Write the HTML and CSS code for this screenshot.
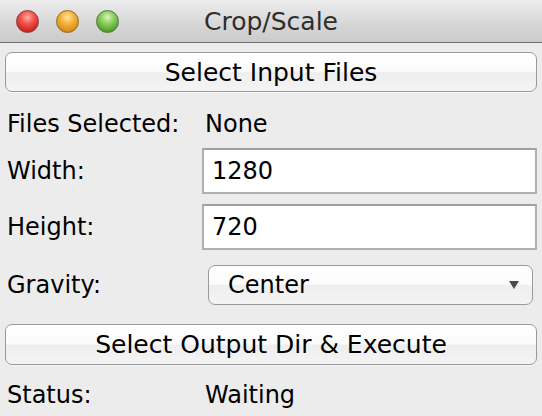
FILE: index.html
```html
<!DOCTYPE html>
<html>
<head>
<meta charset="utf-8">
<link rel="stylesheet" href="styles.css">
</head>
<body>
<div class="window">
  <div class="titlebar">
    <div class="lights">
      <span class="light red"></span>
      <span class="light yellow"></span>
      <span class="light green"></span>
    </div>
    <div class="title">Crop/Scale</div>
  </div>
  <div class="content">
    <div class="btn">Select Input Files</div>
    <div class="row files">
      <div class="label">Files Selected:</div>
      <div class="value">None</div>
    </div>
    <div class="row field first">
      <div class="label">Width:</div>
      <div class="input">1280</div>
    </div>
    <div class="row field second">
      <div class="label">Height:</div>
      <div class="input">720</div>
    </div>
    <div class="row gravity">
      <div class="label">Gravity:</div>
      <div class="select"><span>Center</span><span class="arrow"></span></div>
    </div>
    <div class="btn btn2">Select Output Dir &amp; Execute</div>
    <div class="row status">
      <div class="label">Status:</div>
      <div class="value">Waiting</div>
    </div>
  </div>
</div>
</body>
</html>
```
FILE: styles.css
```css
html, body {
  margin: 0;
  padding: 0;
  background: #ececec;
}
body {
  width: 542px;
  height: 416px;
  overflow: hidden;
  font-family: "DejaVu Sans", "Liberation Sans", sans-serif;
  font-size: 24px;
  color: #000;
}
.titlebar {
  position: relative;
  height: 42px;
  border-bottom: 1px solid #707070;
  background: linear-gradient(#ececec, #d6d6d6 60%, #cbcbcb);
  display: flex;
  align-items: center;
  justify-content: center;
}
.lights {
  position: absolute;
  left: 16px;
  top: 10px;
  display: flex;
  gap: 17px;
}
.light {
  width: 23px;
  height: 23px;
  border-radius: 50%;
  box-sizing: border-box;
}
.red {
  background: radial-gradient(circle at 50% 30%, #ffb0a8 0, #f3574f 35%, #c81f1a 80%, #9e1410 100%);
  border: 1px solid #8a3a36;
}
.yellow {
  background: radial-gradient(circle at 50% 30%, #ffe7a0 0, #f5b540 35%, #d58a10 80%, #a86a08 100%);
  border: 1px solid #8d6a28;
}
.green {
  background: radial-gradient(circle at 50% 30%, #d8f7b8 0, #8ed063 35%, #4f9a2a 80%, #3a7a1a 100%);
  border: 1px solid #4f7a38;
}
.title {
  color: #2e2e2e;
  font-size: 25px;
  margin-top: 1px;
}
.content {
  padding: 9px 5px 0 5px;
  display: flex;
  flex-direction: column;
}
.btn {
  height: 40px;
  box-sizing: border-box;
  border: 1px solid #9a9a9a;
  border-radius: 7px;
  background: linear-gradient(#ffffff, #fbfbfb 48%, #eeeeee 52%, #f4f4f4);
  display: flex;
  align-items: center;
  justify-content: center;
  font-size: 25px;
  box-shadow: 0 1px 0 rgba(255,255,255,0.6);
}
.btn2 {
  margin-top: 19px;
  height: 41px;
}
.row {
  display: flex;
  align-items: center;
}
.label {
  width: 197px;
  padding-left: 2px;
  box-sizing: border-box;
  flex: none;
}
.value {
  padding-left: 3px;
}
.files {
  margin-top: 12px;
  height: 40px;
}
.field {
  height: 46px;
}
.field.first {
  margin-top: 4px;
}
.field.second {
  margin-top: 10px;
}
.input {
  flex: 1;
  height: 46px;
  box-sizing: border-box;
  background: #fff;
  border: 2px solid #b0b0b0;
  border-top-color: #a0a0a0;
  padding-left: 8px;
  display: flex;
  align-items: center;
}
.gravity {
  margin-top: 15px;
  height: 40px;
}
.select {
  flex: 1;
  margin-left: 6px;
  margin-right: 4px;
  height: 40px;
  box-sizing: border-box;
  border: 1px solid #9a9a9a;
  border-radius: 7px;
  background: linear-gradient(#ffffff, #fbfbfb 48%, #eeeeee 52%, #f4f4f4);
  display: flex;
  align-items: center;
  justify-content: space-between;
  padding: 0 13px 0 19px;
}
.arrow {
  width: 0;
  height: 0;
  border-left: 5px solid transparent;
  border-right: 5px solid transparent;
  border-top: 8px solid #4a4a4a;
}
.status {
  margin-top: 10px;
  height: 40px;
}
```
